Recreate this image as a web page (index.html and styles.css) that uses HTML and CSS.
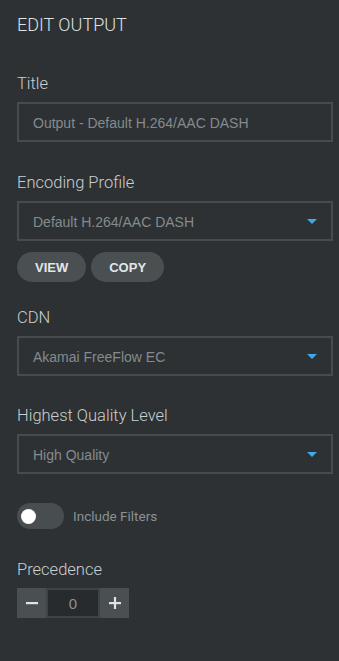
FILE: index.html
```html
<!DOCTYPE html>
<html>
<head>
<meta charset="utf-8">
<link rel="stylesheet" href="styles.css">
</head>
<body>
<div class="panel">
  <h1 class="heading">EDIT OUTPUT</h1>

  <div class="field">
    <div class="label">Title</div>
    <div class="box"><span class="value">Output - Default H.264/AAC DASH</span></div>
  </div>

  <div class="field">
    <div class="label">Encoding Profile</div>
    <div class="box select"><span class="value">Default H.264/AAC DASH</span><span class="caret"></span></div>
    <div class="buttons">
      <button class="pill">VIEW</button>
      <button class="pill">COPY</button>
    </div>
  </div>

  <div class="field after-buttons">
    <div class="label">CDN</div>
    <div class="box select"><span class="value">Akamai FreeFlow EC</span><span class="caret"></span></div>
  </div>

  <div class="field tight">
    <div class="label">Highest Quality Level</div>
    <div class="box select"><span class="value">High Quality</span><span class="caret"></span></div>
  </div>

  <div class="toggle-row">
    <span class="toggle"><span class="knob"></span></span>
    <span class="toggle-label">Include Filters</span>
  </div>

  <div class="field">
    <div class="label">Precedence</div>
    <div class="stepper">
      <span class="step-btn">
        <svg width="12" height="12" viewBox="0 0 12 12"><rect x="0" y="5" width="12" height="2.2" fill="#dfe3e5"/></svg>
      </span>
      <span class="step-value">0</span>
      <span class="step-btn">
        <svg width="12" height="12" viewBox="0 0 12 12"><rect x="0" y="5" width="12" height="2.2" fill="#dfe3e5"/><rect x="4.9" y="0" width="2.2" height="12" fill="#dfe3e5"/></svg>
      </span>
    </div>
  </div>
</div>
</body>
</html>
```

FILE: styles.css
```css
html, body {
  margin: 0;
  padding: 0;
  background: #2d3133;
}
body {
  width: 339px;
  height: 661px;
  overflow: hidden;
  font-family: Roboto, "Liberation Sans", sans-serif;
}
.panel {
  padding: 15px 6px 0 17px;
  display: flex;
  flex-direction: column;
}
.heading {
  margin: 0;
  font-size: 18px;
  line-height: 20px;
  font-weight: 300;
  color: #dde1e3;
}
.field {
  display: flex;
  flex-direction: column;
  margin-top: 39px;
}
.field + .field {
  margin-top: 31px;
}
.field.after-buttons {
  margin-top: 26px;
}
.field.tight {
  margin-top: 30px;
}
.label {
  font-size: 16.5px;
  line-height: 20px;
  font-weight: 300;
  color: #c9cfd2;
  margin-bottom: 8px;
}
.box {
  height: 40px;
  box-sizing: border-box;
  border: 2px solid #454b4e;
  padding: 0 14px;
  display: flex;
  align-items: center;
  font-family: "Liberation Sans", Arial, sans-serif;
  font-size: 14px;
  color: #848b8f;
}
.value {
  flex: 1;
  padding-top: 1px;
}
.caret {
  width: 0;
  height: 0;
  border-left: 5px solid transparent;
  border-right: 5px solid transparent;
  border-top: 5px solid #3ea8ea;
}
.buttons {
  display: flex;
  gap: 5px;
  margin-top: 11px;
}
.pill {
  height: 30px;
  padding: 0 18px;
  border: none;
  border-radius: 15px;
  background: #4a4f52;
  color: #e2e6e8;
  font-family: "Liberation Sans", Arial, sans-serif;
  font-weight: 700;
  font-size: 13px;
}
.toggle-row {
  display: flex;
  align-items: center;
  gap: 9px;
  margin-top: 29px;
}
.toggle {
  width: 47px;
  height: 26px;
  border-radius: 13px;
  background: #484d50;
  display: flex;
  align-items: center;
  padding-left: 4px;
  box-sizing: border-box;
}
.knob {
  width: 15px;
  height: 15px;
  border-radius: 50%;
  background: #ffffff;
}
.toggle-label {
  font-size: 13.5px;
  color: #8a9195;
}
.toggle-row + .field {
  margin-top: 31px;
}
.stepper {
  display: flex;
  height: 30px;
}
.step-btn {
  width: 29px;
  background: #4a4f52;
  display: flex;
  align-items: center;
  justify-content: center;
}
.step-value {
  width: 54px;
  box-sizing: border-box;
  border: 2px solid #3c4447;
  background: #272b2d;
  display: flex;
  align-items: center;
  justify-content: center;
  font-family: "Liberation Sans", Arial, sans-serif;
  font-size: 15px;
  color: #8a9195;
}
```
